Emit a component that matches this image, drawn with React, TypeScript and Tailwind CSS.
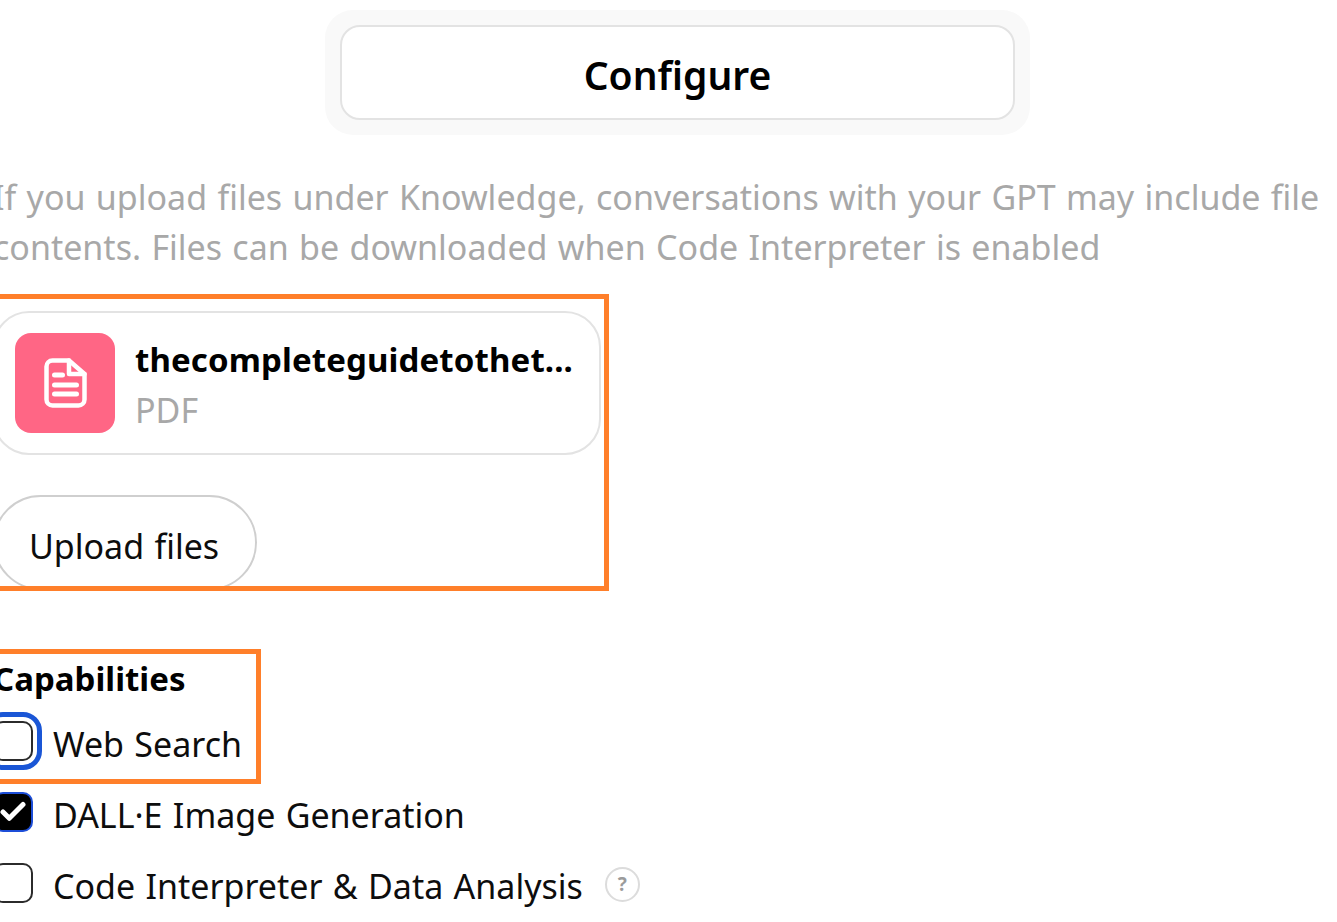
import { Check } from 'lucide-react';

const font = "font-['Noto_Sans','Open_Sans',sans-serif]";

function FileIcon() {
  return (
    <svg viewBox="0 0 43 50" className="w-[43px] h-[50px]" fill="none" stroke="white" strokeWidth="4.5" strokeLinecap="round" strokeLinejoin="round">
      <path d="M25 2.5H8.5a6 6 0 0 0-6 6v33a6 6 0 0 0 6 6h26a6 6 0 0 0 6-6V16Z" />
      <path d="M25 2.5V16h15.5" />
      <path d="M10.5 17h8M10.5 27h22M10.5 36h22" strokeWidth="5" />
    </svg>
  );
}

function Capability({ label, checked, focused, help }: { label: string; checked?: boolean; focused?: boolean; help?: boolean }) {
  return (
    <div className="flex items-center h-[50px] gap-[20px]">
      <div className={`w-[40px] h-[40px] -mt-[6px] shrink-0 rounded-[10px] flex items-center justify-center ${checked ? 'bg-black border-2 border-[#1d4ed8]' : 'bg-white border-2 border-[#2b2b2b]'} ${focused ? 'outline-[5px] outline-[#1a56d6] outline-offset-[4px]' : ''}`}>
        {checked && <Check className="w-[30px] h-[30px] text-white" strokeWidth={4} />}
      </div>
      <span className="text-[34px] leading-[50px] [word-spacing:1.5px] text-[#0d0d0d]">{label}</span>
      {help && (
        <span className="ml-[2px] -mt-[4px] w-[35px] h-[35px] rounded-full border-2 border-[#dcdcdc] flex items-center justify-center text-[19px] font-bold text-[#9b9b9b]">?</span>
      )}
    </div>
  );
}

export default function App() {
  return (
    <div className={`relative w-[1337px] h-[922px] overflow-hidden bg-white ${font}`}>
      <div className="pt-[10px] flex justify-center">
        <div className="w-[705px] h-[125px] bg-[#f9f9f9] rounded-[28px] p-[15px] translate-x-[9px]">
          <div className="h-[95px] pt-[5px] bg-white border-2 border-[#e3e3e3] rounded-[20px] flex items-center justify-center text-[39px] font-semibold text-black">
            Configure
          </div>
        </div>
      </div>

      <div className="-ml-[7px] w-[1344px]">
        <p className="mt-[37px] text-[34px] leading-[50px] [word-spacing:1.5px] text-[#a8a8a8] whitespace-nowrap">
          If you upload files under Knowledge, conversations with your GPT may include file
          <br />
          contents. Files can be downloaded when Code Interpreter is enabled
        </p>

        <div className="mt-[39px] w-[608px] h-[144px] border-2 border-[#e3e3e3] rounded-[36px] flex items-center gap-[20px] pl-[20px]">
          <div className="w-[100px] h-[100px] shrink-0 rounded-[16px] bg-[#ff6685] flex items-center justify-center">
            <FileIcon />
          </div>
          <div className="pt-[4px]">
            <div className="text-[33px] leading-[50px] tracking-[0.12px] font-bold text-black whitespace-nowrap">thecompleteguidetothet...</div>
            <div className="text-[34px] leading-[50px] text-[#a8a8a8]">PDF</div>
          </div>
        </div>

        <button className="mt-[40px] h-[95px] pl-[34px] pr-[36px] pt-[7px] rounded-full border-2 border-[#cfcfcf] text-[34px] [word-spacing:1.5px] text-[#0d0d0d]">
          Upload files
        </button>

        <div className="mt-[64px] text-[33px] leading-[50px] font-bold text-black">Capabilities</div>
        <div className="mt-[15px] flex flex-col gap-[21px]">
          <Capability label="Web Search" focused />
          <Capability label="DALL·E Image Generation" checked />
          <Capability label="Code Interpreter & Data Analysis" help />
        </div>
      </div>

      {/* annotation boxes drawn over the screenshot */}
      <div className="absolute -left-[10px] top-[294px] w-[619px] h-[297px] border-[5px] border-[#ff7f2a]" />
      <div className="absolute -left-[10px] top-[649px] w-[271px] h-[135px] border-[5px] border-[#ff7f2a]" />
    </div>
  );
}
